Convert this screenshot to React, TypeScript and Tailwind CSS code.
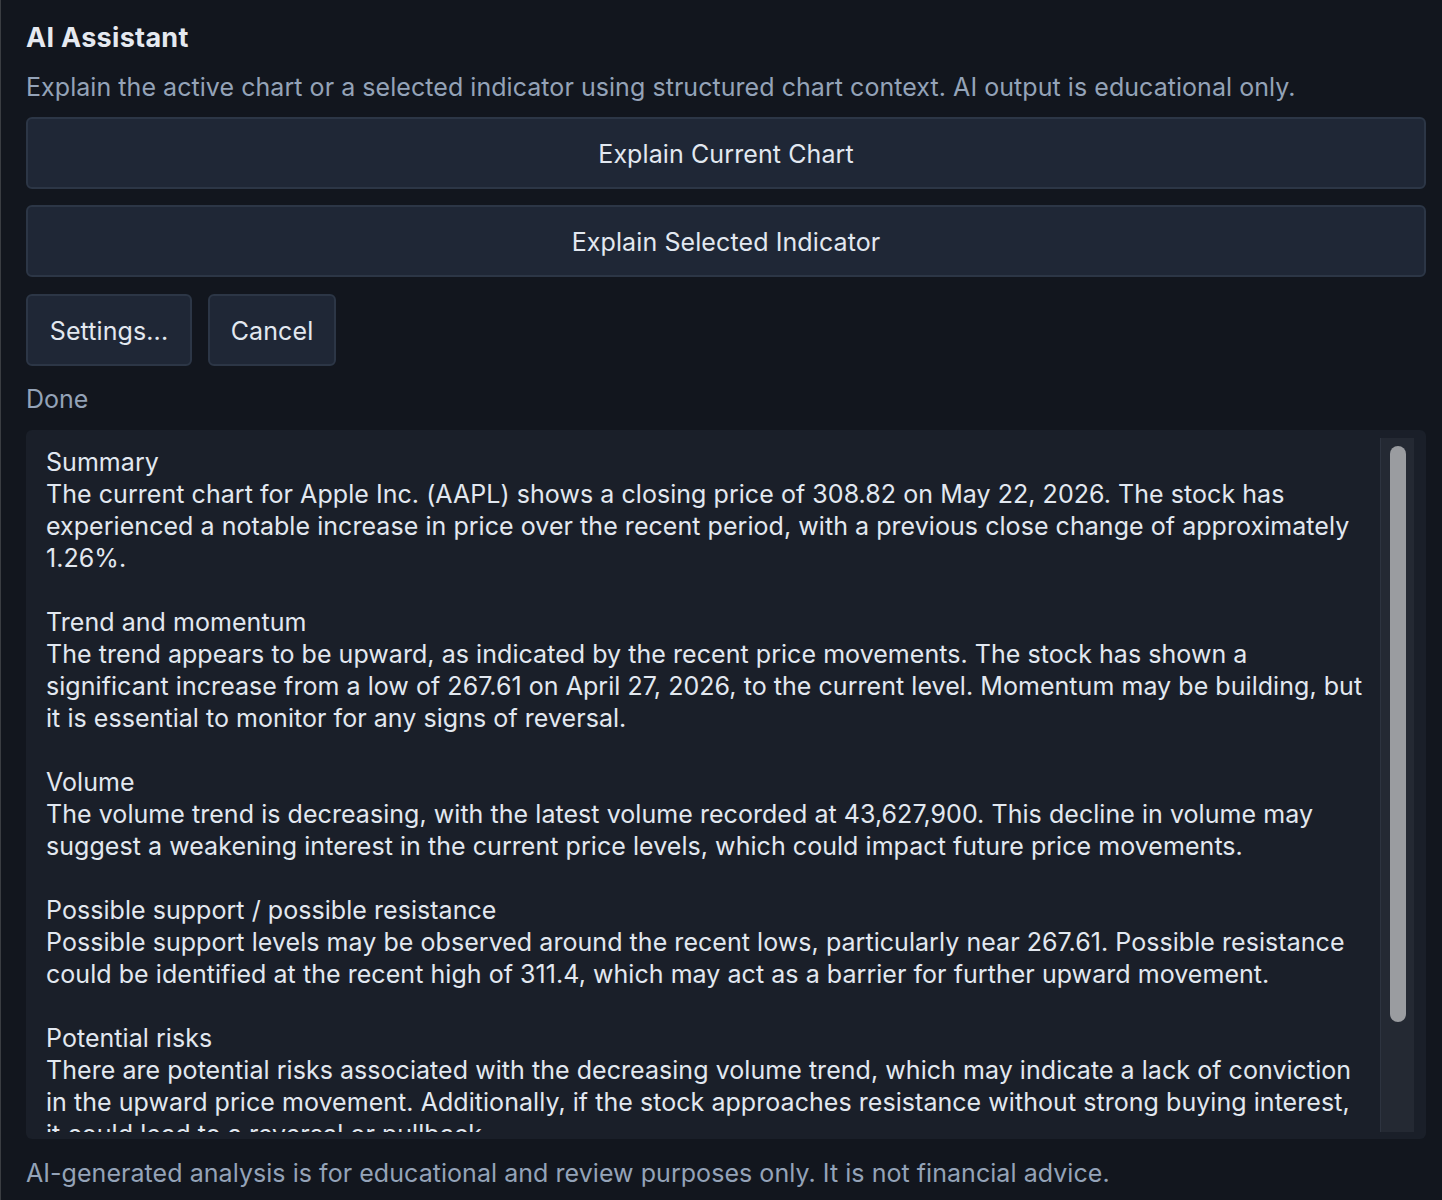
const analysis = `Summary
The current chart for Apple Inc. (AAPL) shows a closing price of 308.82 on May 22, 2026. The stock has experienced a notable increase in price over the recent period, with a previous close change of approximately 1.26%.

Trend and momentum
The trend appears to be upward, as indicated by the recent price movements. The stock has shown a significant increase from a low of 267.61 on April 27, 2026, to the current level. Momentum may be building, but it is essential to monitor for any signs of reversal.

Volume
The volume trend is decreasing, with the latest volume recorded at 43,627,900. This decline in volume may suggest a weakening interest in the current price levels, which could impact future price movements.

Possible support / possible resistance
Possible support levels may be observed around the recent lows, particularly near 267.61. Possible resistance could be identified at the recent high of 311.4, which may act as a barrier for further upward movement.

Potential risks
There are potential risks associated with the decreasing volume trend, which may indicate a lack of conviction in the upward price movement. Additionally, if the stock approaches resistance without strong buying interest, it could lead to a reversal or pullback.`;

function ActionButton({ label, className = "" }: { label: string; className?: string }) {
  return (
    <button
      className={`h-[72px] rounded-md border-2 border-[#2c3646] bg-[#1f2736] pt-[3px] text-[25px] tracking-[0.1px] text-[#e2e8f0] ${className}`}
    >
      {label}
    </button>
  );
}

export default function App() {
  return (
    <div
      className="min-h-[1200px] border-l border-[#3a3d42] bg-[#12161e] pl-[25px] pr-4 pt-[20px]"
      style={{ fontFamily: "Inter, 'Noto Sans', sans-serif" }}
    >
      <h1 className="text-[27px] font-bold leading-[36px] tracking-[0.3px] text-[#e5e9f0]">AI Assistant</h1>
      <p className="mt-[15px] text-[25px] leading-[32px] tracking-[0.05px] text-[#94a3b8]">
        Explain the active chart or a selected indicator using structured chart context. AI output is educational only.
      </p>

      <div className="mt-[14px] flex flex-col gap-[16px]">
        <ActionButton label="Explain Current Chart" className="w-full" />
        <ActionButton label="Explain Selected Indicator" className="w-full" />
      </div>

      <div className="mt-[17px] flex gap-[16px]">
        <ActionButton label="Settings..." className="w-[166px]" />
        <ActionButton label="Cancel" className="w-[128px]" />
      </div>

      <div className="mt-[17px] text-[25px] leading-[32px] text-[#94a3b8]">Done</div>

      <div className="mt-[15px] flex h-[709px] rounded-md bg-[#1a1f29]">
        <div className="flex-1 overflow-hidden pb-[7px] pl-[20px] pr-[14px] pt-[16px]">
          <div className="h-full overflow-hidden whitespace-pre-wrap text-[25px] leading-[32px] tracking-[0.05px] text-[#e2e8f0]">
            {analysis}
          </div>
        </div>
        <div className="mb-[7px] mr-[12px] mt-[8px] flex w-[34px] justify-center border-l border-[#2e3440] bg-[#242933] pt-[8px]">
          <div className="h-[576px] w-[16px] rounded-full bg-[#9a9ca0]" />
        </div>
      </div>

      <p className="mt-[18px] text-[25px] leading-[32px] tracking-[0.05px] text-[#94a3b8]">
        AI-generated analysis is for educational and review purposes only. It is not financial advice.
      </p>
    </div>
  );
}
